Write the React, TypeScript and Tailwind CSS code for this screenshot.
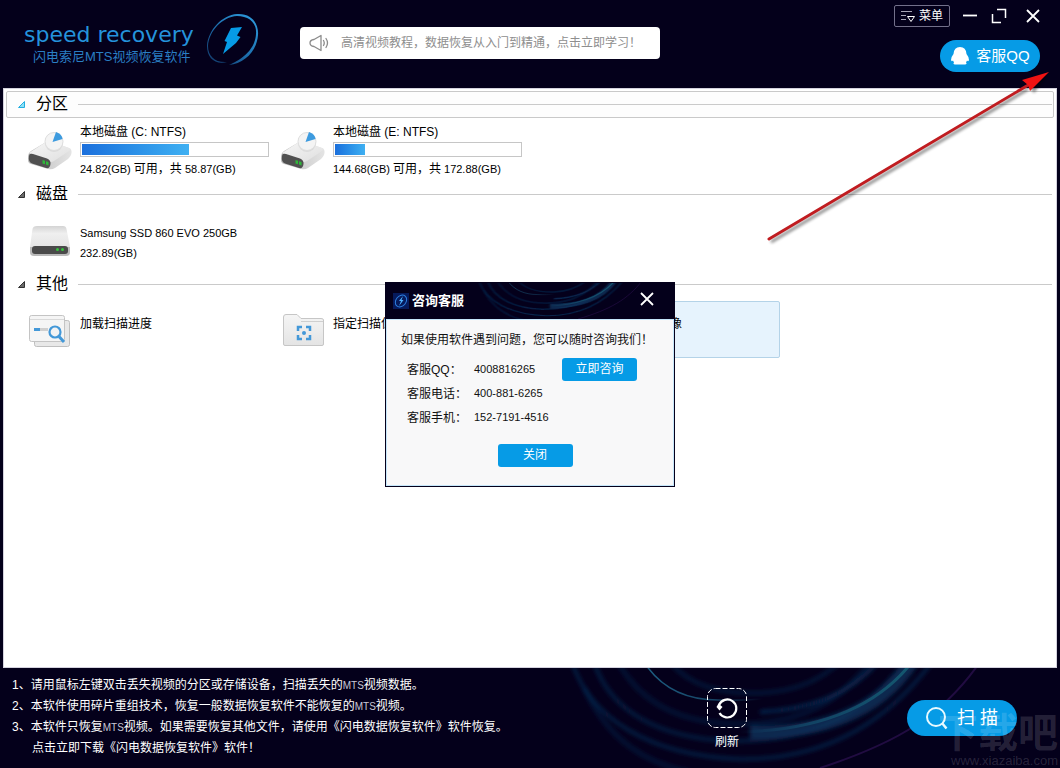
import React from "react";

const blue = "#069be6";

function LogoMark() {
  return (
    <svg width="54" height="54" viewBox="0 0 54 54" aria-hidden="true">
      <defs>
        <linearGradient id="ring" x1="1" y1="0" x2="0.1" y2="1">
          <stop offset="0" stopColor="#2f9fe0" />
          <stop offset="0.55" stopColor="#1d6fae" />
          <stop offset="1" stopColor="#123a6b" />
        </linearGradient>
      </defs>
      <path
        fillRule="evenodd"
        fill="url(#ring)"
        d="M31 1C45 0 53 10 52 22C51 38 38 51 23 52C32 48 49 39 50 21C51 9 42 3 31 3C16 4 3 18 2 33C2 43 9 50 21 49C9 52 1 45 1 33C2 17 16 2 31 1Z"
      />
      <path d="M25 15L36 14L31 22.500L34.500 24L30 30L17 41L21 29L18.500 28Z" fill={blue} />
    </svg>
  );
}

function Speaker() {
  return (
    <svg width="20" height="18" viewBox="0 0 20 18" fill="none" stroke="#8b8b8b" strokeWidth="1.3" strokeLinejoin="round" strokeLinecap="round" aria-hidden="true">
      <path d="M12 1.5L5 5.5Q1 6 1 9Q1 12 5 12.5L12 16.5Z" />
      <path d="M14.5 6.5Q16 9 14.5 11.5M17 4.5Q20 9 17 13.5" />
    </svg>
  );
}

function DriveIcon() {
  return (
    <svg width="44" height="40" viewBox="0 0 44 40" aria-hidden="true">
      <defs>
        <linearGradient id="driveTop" x1="0" y1="0" x2="1" y2="1">
          <stop offset="0" stopColor="#f6f6f6" />
          <stop offset="1" stopColor="#dfdfdf" />
        </linearGradient>
        <linearGradient id="driveSide" x1="0" y1="0" x2="1" y2="0">
          <stop offset="0" stopColor="#bdbdbd" />
          <stop offset="1" stopColor="#e4e4e4" />
        </linearGradient>
      </defs>
      <path d="M0 25Q0 22 3 20L18 11Q21 10 24 11L41 17Q44 18 43.500 22L43 24Q42 26 40 28L27 37Q24 39 20 38L3 33Q0 32 0 29Z" fill="url(#driveSide)" />
      <path d="M1 22L18 11Q21 10 24 11L41 17Q44 18 41 20L26 30Q23 32 20 30Z" fill="url(#driveTop)" />
      <path d="M1 25Q1 22 5 23L19 27.500Q23 29 22.500 33Q22 38 18 37L4 32.500Q0 31 1 25Z" fill="#505050" />
      <path d="M14.500 29l2.500 .8v3.400l-2.500-.8zM18 30.200l2.500 .8v3.400l-2.500-.8z" fill="#2fb83a" />
      <circle cx="26" cy="12" r="9" fill="#cccccc" opacity=".5" />
      <circle cx="26" cy="10.500" r="9" fill="#f4f4f4" stroke="#dedede" />
      <path d="M24.500 11L28 1Q34 3 34.500 8Z" fill="#3d9bdf" />
    </svg>
  );
}

function DiskIcon() {
  return (
    <svg width="44" height="40" viewBox="0 0 44 40" aria-hidden="true">
      <defs>
        <linearGradient id="diskTop" x1="0" y1="0" x2="0" y2="1">
          <stop offset="0" stopColor="#d4d4d4" />
          <stop offset="0.25" stopColor="#efefef" />
          <stop offset="1" stopColor="#dedede" />
        </linearGradient>
      </defs>
      <path d="M9 5H35Q38 5 38.500 8L42 26V31Q42 35 38 35H6Q2 35 2 31V26L4.500 8Q5 5 9 5Z" fill="url(#diskTop)" />
      <path d="M2 26V31Q2 35 6 35H38Q42 35 42 31V26Z" fill="#bababa" />
      <rect x="4" y="25" width="36" height="8" rx="3" fill="#4a4a4a" />
      <circle cx="29.500" cy="28.500" r="1.500" fill="#35c43c" />
      <circle cx="34.500" cy="28.500" r="1.500" fill="#35c43c" />
    </svg>
  );
}

function ProgressIcon() {
  return (
    <svg width="44" height="40" viewBox="0 0 44 40" fill="none" aria-hidden="true">
      <rect x="6.500" y="9.500" width="35" height="26" rx="2" fill="#e8e8e8" stroke="#bfbfbf" />
      <rect x="1.500" y="4.500" width="35" height="26" rx="2" fill="#f5f5f5" stroke="#c4c4c4" />
      <path d="M2 8.500H36" stroke="#d9d9d9" />
      <path d="M6 18.500H12" stroke="#4398d8" strokeWidth="3" />
      <path d="M12 18.500H20" stroke="#cfcfcf" strokeWidth="3" />
      <circle cx="27" cy="21" r="5.500" fill="#f3f3f3" stroke="#4398d8" strokeWidth="2.200" />
      <path d="M31 25.500L36 31" stroke="#4398d8" strokeWidth="3" />
    </svg>
  );
}

function FolderIcon() {
  return (
    <svg width="44" height="40" viewBox="0 0 44 40" fill="none" aria-hidden="true">
      <defs>
        <linearGradient id="folder" x1="0" y1="0" x2="0" y2="1">
          <stop offset="0" stopColor="#f5f5f5" />
          <stop offset="1" stopColor="#e4e4e4" />
        </linearGradient>
      </defs>
      <path d="M2.500 6Q2.500 3.500 5 3.500H16L20 7.500H40Q42.500 7.500 42.500 9V33Q42.500 34.500 41 34.500H4Q2.500 34.500 2.500 33Z" fill="url(#folder)" stroke="#c6c6c6" />
      <path d="M20 10.500H42" stroke="#cfcfcf" />
      <path d="M17 20V16H21M25 16H29V20M29 24V28H25M21 28H17V24" stroke="#4398d8" strokeWidth="2.500" />
      <circle cx="23" cy="22" r="2" fill="#4398d8" />
    </svg>
  );
}

function Swirl({ className }: { className: string }) {
  return (
    <svg className={className} viewBox="0 0 500 100" preserveAspectRatio="none" fill="none" aria-hidden="true">
      <defs>
        <filter id="glow" x="-5%" y="-20%" width="110%" height="140%">
          <feGaussianBlur stdDeviation="2" />
        </filter>
        <linearGradient id="fadeRight" x1="0" y1="0" x2="1" y2="0">
          <stop offset="0" stopColor="#1d5f82" />
          <stop offset="0.6" stopColor="#1d5f82" stopOpacity=".7" />
          <stop offset="1" stopColor="#1d5f82" stopOpacity="0" />
        </linearGradient>
        <linearGradient id="fadeLeft" x1="1" y1="0" x2="0" y2="0">
          <stop offset="0" stopColor="#14586f" />
          <stop offset="0.6" stopColor="#14506f" stopOpacity=".7" />
          <stop offset="1" stopColor="#14506f" stopOpacity="0" />
        </linearGradient>
      </defs>
      <g stroke="#0c3560" filter="url(#glow)">
        <path d="M12 -6C30 50 90 88 180 91C270 92 330 50 372 -6" strokeWidth="3" opacity=".7" />
        <path d="M34 -6C50 44 100 70 170 73C260 74 310 40 345 -6" strokeWidth="4" opacity=".55" />
        <path d="M58 -6C80 34 120 56 180 56C240 56 280 34 310 -6" strokeWidth="5" opacity=".35" />
        <path d="M110 -6C130 18 160 26 200 25C240 23 262 10 280 -6" strokeWidth="4" opacity=".45" />
        <path d="M24 20C50 76 90 96 130 104" strokeWidth="5" opacity=".35" />
        <path d="M352 -6C320 44 260 66 190 64" strokeWidth="13" opacity=".75" />
        <path d="M318 -6C290 26 250 42 200 44" strokeWidth="4" opacity=".7" />
      </g>
      <path d="M84 -6C102 22 130 32 158 32C176 33 190 32 202 31" stroke="url(#fadeRight)" strokeWidth="1.500" />
      <path d="M352 -6C318 38 260 62 180 64" stroke="url(#fadeLeft)" strokeWidth="3" />
      <path d="M420 -6C384 46 340 74 260 100" stroke="#35145c" strokeWidth="2" opacity=".6" />
    </svg>
  );
}

function Close({ size }: { size: number }) {
  return (
    <svg width={size} height={size} viewBox="0 0 14 14" stroke="#fff" strokeWidth="1.800" aria-hidden="true">
      <path d="M1 1L13 13M13 1L1 13" />
    </svg>
  );
}

function Header() {
  return (
    <header className="flex h-[88px] shrink-0 items-start text-white">
      <div className="flex w-[300px] shrink-0 pl-6 pt-[13px] text-[#2493dc]">
        <div className="flex w-[182px] flex-col pt-2">
          <span className="whitespace-nowrap font-['DejaVu_Sans','Noto_Sans',sans-serif] text-[22px] leading-7">speed recovery</span>
          <span className="whitespace-nowrap pl-[9px] text-[13px] leading-4 text-[#2a7fc4]">闪电索尼MTS视频恢复软件</span>
        </div>
        <LogoMark />
      </div>
      <a href="#tutorial" className="mt-[27px] flex h-8 w-[360px] items-center gap-3 rounded bg-white pl-[9px] text-xs text-[#8e8e8e]">
        <Speaker />
        <span className="whitespace-nowrap">高清视频教程，数据恢复从入门到精通，点击立即学习！</span>
      </a>
      <div className="ml-auto flex flex-col items-end gap-[13px] pr-5 pt-[5px]">
        <div className="flex items-center">
          <button className="flex h-[22px] w-14 items-center justify-center gap-1 rounded-xs border border-[#73708a] text-xs">
            <svg width="14" height="13" viewBox="0 0 14 13" fill="none" stroke="#a6a4b4" aria-hidden="true">
              <path d="M0 1.500H11M0 5.500H5M0 9.500H5" />
              <path d="M6.500 6.500H13.500L10 11.500Z" stroke="#fff" />
            </svg>
            菜单
          </button>
          <button aria-label="最小化" className="ml-3 flex h-[22px] w-4 items-center">
            <svg width="16" height="14" viewBox="0 0 16 14" aria-hidden="true"><path d="M1 6.500H15" stroke="#fff" strokeWidth="1.800" /></svg>
          </button>
          <button aria-label="最大化" className="ml-[13px] flex h-[22px] w-4 items-center">
            <svg width="16" height="16" viewBox="0 0 16 16" fill="none" stroke="#fff" strokeWidth="1.500" aria-hidden="true">
              <path d="M6 1.500H14.500V10M1.500 6V14.500H10" />
            </svg>
          </button>
          <button aria-label="关闭窗口" className="ml-[19px] flex h-[22px] items-center"><Close size={14} /></button>
        </div>
        <button className="flex h-8 w-[100px] items-center justify-center gap-[6px] rounded-full bg-[#069be6] text-[15px]">
          <svg width="20" height="20" viewBox="0 0 20 20" fill="#fff" aria-hidden="true">
            <path d="M10 1Q16 1 16.500 8Q19 11 19 14Q18.500 16 17 14.500L16 16.500Q17.500 18 15 18.500H5Q2.500 18 4 16.500L3 14.500Q1.500 16 1 14Q1 11 3.500 8Q4 1 10 1Z" />
          </svg>
          客服QQ
        </button>
      </div>
    </header>
  );
}

function Section({ title, active, children }: { title: string; active?: boolean; children: React.ReactNode }) {
  return (
    <section>
      <div className={active ? "flex h-[27px] items-center rounded-xs border border-[#c9c9c9] bg-[#fdfdfd]" : "flex h-[27px] items-center rounded-xs border border-transparent"}>
        <svg className="ml-[11px]" width="7" height="7" viewBox="0 0 7 7" aria-hidden="true">
          <path d="M6.500 .5V6.500H.5Z" fill={active ? "#8fe0f5" : "#6a6a6a"} stroke={active ? "#22aee0" : "#333"} />
        </svg>
        <h2 className="ml-[11px] w-[42px] pb-0.5 text-base leading-5">{title}</h2>
        <span className="mr-px h-px flex-1 bg-[#cacaca]" />
      </div>
      <ul className="flex h-[63px] pl-[15px] pt-[3px]">{children}</ul>
    </section>
  );
}

function Item({ icon, selected, children }: { icon: React.ReactNode; selected?: boolean; children: React.ReactNode }) {
  return (
    <li className={selected ? "flex h-[57px] w-[253px] gap-2 rounded-xs border border-[#b4d3e8] bg-[#e6f3fd] pl-[6px]" : "flex h-[57px] w-[253px] gap-2 border border-transparent pl-[6px]"}>
      <span className="shrink-0 pt-[9px]">{icon}</span>
      {children}
    </li>
  );
}

function Partition({ name, free, total, used }: { name: string; free: string; total: string; used: number }) {
  return (
    <Item icon={<DriveIcon />}>
      <div className="pt-[2px]">
        <div className="text-xs leading-4">{name}</div>
        <div className="mb-1 mt-[2px] h-[15px] w-[189px] border border-[#c6c6c6] p-px" role="img" aria-label={name}>
          <div className="h-full bg-linear-to-r from-[#1b6fdc] to-[#3fb0f2]" style={{ width: `${used}%` }} />
        </div>
        <div className="whitespace-nowrap text-[11px] leading-4">
          {free}(GB) <span className="text-xs leading-4">可用，共</span> {total}(GB)
        </div>
      </div>
    </Item>
  );
}

function SupportDialog() {
  const rows = [
    ["客服QQ：", "4008816265"],
    ["客服电话：", "400-881-6265"],
    ["客服手机：", "152-7191-4516"],
  ];
  return (
    <div className="absolute inset-0 grid place-items-center">
      <div role="dialog" aria-labelledby="support-title" className="w-[290px] border border-[#04001b] bg-[#f8f8f9] text-xs text-[#111]">
        <div className="relative flex h-9 items-center bg-[#04001b] pl-[7px] text-white">
          <Swirl className="absolute right-0 top-0 h-full w-[200px]" />
          <svg className="relative" width="16" height="16" viewBox="0 0 16 16" fill="none" aria-hidden="true">
            <rect width="16" height="16" fill="#061a5c" />
            <ellipse cx="8" cy="8" rx="5" ry="6.500" transform="rotate(40 8 8)" stroke="#2d7fe0" />
            <path d="M10 3L6 8H8L6 13L10.500 7H8.500Z" fill="#4fb2ff" />
          </svg>
          <h1 id="support-title" className="relative ml-[3px] text-[13px] font-bold">咨询客服</h1>
          <button aria-label="关闭对话框" className="relative mb-1 ml-auto mr-5"><Close size={14} /></button>
        </div>
        <div className="border border-[#c5e6fa] px-[14px] pb-[18px] pt-3">
          <p className="whitespace-nowrap leading-4">如果使用软件遇到问题，您可以随时咨询我们！</p>
          <div className="mt-[10px] flex pl-[6px]">
            <dl className="w-[155px]">
              {rows.map(([label, value]) => (
                <div key={label} className="flex h-6 items-center">
                  <dt className="w-[67px] whitespace-nowrap">{label}</dt>
                  <dd className="whitespace-nowrap text-[11px]">{value}</dd>
                </div>
              ))}
            </dl>
            <button className="flex h-[23px] w-[75px] items-center justify-center rounded-[3px] bg-[#069be6] text-white">立即咨询</button>
          </div>
          <div className="flex justify-center pl-[10px] pt-[14px]">
            <button className="flex h-[23px] w-[75px] items-center justify-center rounded-[3px] bg-[#069be6] text-white">关闭</button>
          </div>
        </div>
      </div>
    </div>
  );
}

function Mts() {
  return <span className="text-[10px] text-[#c9c8d6]">MTS</span>;
}

function Footer() {
  return (
    <footer className="relative flex h-[100px] shrink-0 overflow-hidden text-xs text-white">
      <Swirl className="absolute right-0 top-0 h-full w-[500px]" />
      <div className="relative flex-1 whitespace-nowrap pl-3 pt-[7px] leading-5">
        <p>1、请用鼠标左键双击丢失视频的分区或存储设备，扫描丢失的<Mts />视频数据。</p>
        <p>2、本软件使用碎片重组技术，恢复一般数据恢复软件不能恢复的<Mts />视频。</p>
        <p>3、本软件只恢复<Mts />视频。如果需要恢复其他文件，请使用《闪电数据恢复软件》软件恢复。</p>
        <p className="pl-5"><a href="#download">点击立即下载《闪电数据恢复软件》软件！</a></p>
      </div>
      <button className="relative mt-5 flex w-10 flex-col items-center gap-[6px] self-start">
        <svg width="40" height="40" viewBox="0 0 40 40" fill="none" stroke="#fff" aria-hidden="true">
          <rect x=".5" y=".5" width="39" height="39" rx="8" strokeDasharray="5 2" />
          <path d="M12.500 25A9 9 0 1 0 12 17" strokeWidth="2.200" />
          <path d="M9.500 19L11.500 15.500L15.500 19L12.500 22.500Z" fill="#fff" stroke="none" />
        </svg>
        <span className="leading-4">刷新</span>
      </button>
      <button className="relative ml-40 mr-[43px] mt-8 flex h-9 w-[110px] items-center gap-2 self-start rounded-full bg-[#069be6] pl-[18px] text-lg">
        <svg width="24" height="24" viewBox="0 0 24 24" fill="none" stroke="#e8faff" strokeWidth="2" aria-hidden="true">
          <circle cx="11" cy="11" r="9" />
          <path d="M17 17L21.500 22.500" strokeWidth="2.500" />
        </svg>
        <span className="whitespace-nowrap">扫 描</span>
      </button>
      <div className="pointer-events-none absolute bottom-0 right-[2px] flex flex-col items-end text-white/15" aria-hidden="true">
        <span className="text-[40px] font-bold leading-[42px]">下载吧</span>
        <span className="text-[13px] leading-[14px]">www.xiazaiba.com</span>
      </div>
    </footer>
  );
}

function Arrow() {
  return (
    <svg className="pointer-events-none absolute right-0 top-[60px]" width="300" height="190" viewBox="760 60 300 190" aria-hidden="true">
      <defs>
        <filter id="soft" x="-10%" y="-10%" width="120%" height="120%"><feGaussianBlur stdDeviation="1.800" /></filter>
      </defs>
      <path d="M771 242L1028 89" stroke="#000" strokeWidth="3" opacity=".45" filter="url(#soft)" />
      <path d="M1048 74L1034 93L1026 82Z" fill="#000" opacity=".45" filter="url(#soft)" />
      <path d="M769 239L1030 84" stroke="#c01c20" strokeWidth="3" strokeLinecap="round" />
      <path d="M1049 72L1030 91L1028 85L1022 80Z" fill="#f01212" />
    </svg>
  );
}

export default function App() {
  return (
    <div className="relative flex min-h-screen flex-col bg-[#04001b] font-['Liberation_Sans','Noto_Sans_CJK_SC',sans-serif] text-black">
      <Header />
      <main className="mx-[3px] flex-1 border border-[#d4d2de] bg-white px-[2px] pt-[2px]">
        <Section title="分区" active>
          <Partition name="本地磁盘 (C: NTFS)" free="24.82" total="58.87" used={57.8} />
          <Partition name="本地磁盘 (E: NTFS)" free="144.68" total="172.88" used={16.3} />
        </Section>
        <Section title="磁盘">
          <Item icon={<DiskIcon />}>
            <div className="whitespace-nowrap pt-[11px] text-[11px] leading-5">
              <div>Samsung SSD 860 EVO 250GB</div>
              <div>232.89(GB)</div>
            </div>
          </Item>
        </Section>
        <Section title="其他">
          <Item icon={<ProgressIcon />}>
            <div className="whitespace-nowrap pt-3 text-xs leading-5">加载扫描进度</div>
          </Item>
          <Item icon={<FolderIcon />}>
            <div className="whitespace-nowrap pt-3 text-xs leading-5">指定扫描位置</div>
          </Item>
          <Item icon={<DiskIcon />} selected>
            <div className="whitespace-nowrap pt-3 text-xs leading-5">加载虚拟磁盘镜像</div>
          </Item>
        </Section>
      </main>
      <Footer />
      <SupportDialog />
      <Arrow />
    </div>
  );
}
